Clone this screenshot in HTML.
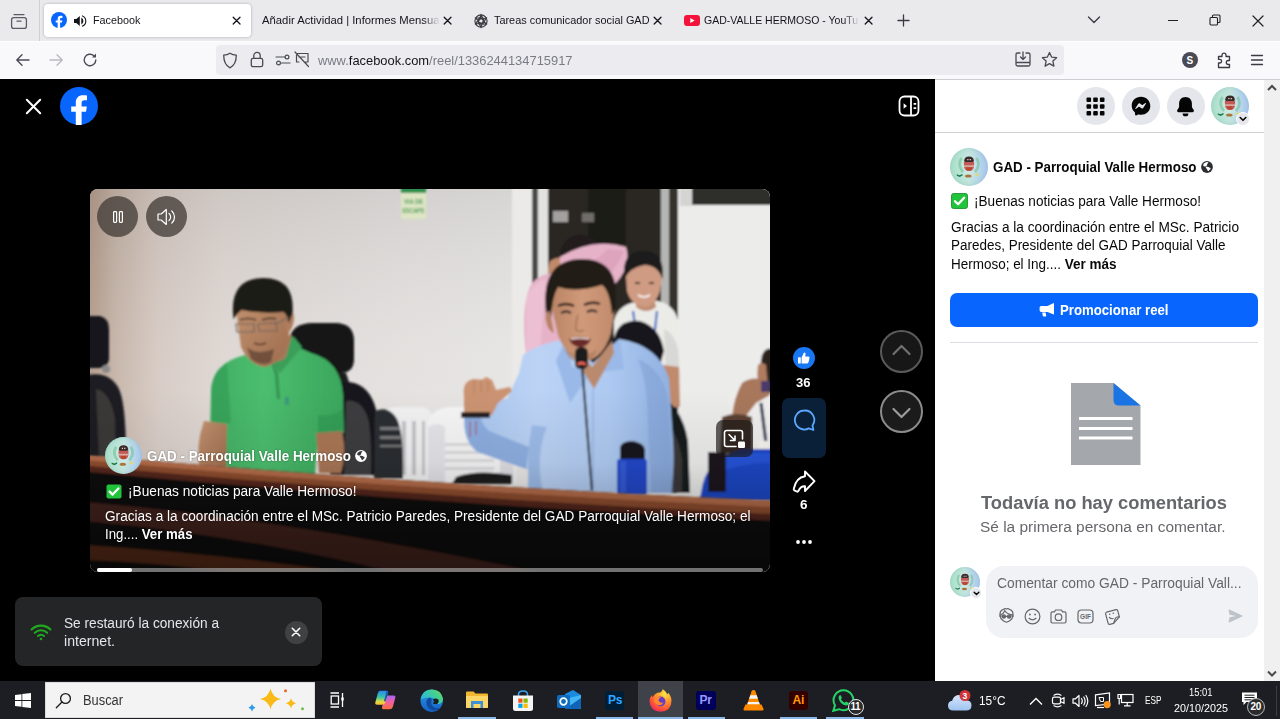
<!DOCTYPE html>
<html lang="es">
<head>
<meta charset="utf-8">
<title>Facebook</title>
<style>
*{box-sizing:border-box;margin:0;padding:0}
html,body{width:1280px;height:719px;overflow:hidden;background:#000;font-family:"Liberation Sans","DejaVu Sans",sans-serif;}
#root{position:relative;width:1280px;height:719px;overflow:hidden;background:#000}
.abs{position:absolute}
.t{position:absolute;white-space:nowrap;line-height:1;transform-origin:0 50%}
/* browser chrome */
#tabbar{left:0;top:0;width:1280px;height:41px;background:#eaeaed}
#navbar{left:0;top:41px;width:1280px;height:39px;background:#f9f9fb;border-bottom:1.500px solid #cdcdd2}
#acttab{left:44px;top:4px;width:207px;height:33px;background:#fff;border-radius:4px;box-shadow:0 0 3px rgba(0,0,0,.28)}
#urlbar{left:216px;top:45px;width:848px;height:30px;background:#ececf0;border-radius:4px}
.tabt{font-size:11.500px;color:#15141a;top:15.300px}
/* content */
#left{left:0;top:79px;width:935px;height:603px;background:#000}
#right{left:935px;top:80px;width:329px;height:602px;background:#fff}
#sbar{left:1264px;top:80px;width:16px;height:602px;background:#f0f0f0}
#taskbar{left:0;top:681px;width:1280px;height:38px;background:#1c1e23}
</style>
<style id="fit">
#tb1{transform:scaleX(0.9403)}
#tb2{transform:scaleX(0.9824)}
#tb3{transform:scaleX(0.9466)}
#tb4{transform:scaleX(0.9136)}
#url{transform:scaleX(0.9551)}
#cap1{transform:scaleX(0.9570)}
#cap2{transform:scaleX(0.9766)}
#cap3{transform:scaleX(0.9729)}
#cap4{transform:scaleX(0.9445)}
#n36{transform:scaleX(1.0022)}
#n6{transform:scaleX(1.0367)}
#to1{transform:scaleX(0.9763)}
#to2{transform:scaleX(1.0080)}
#rp1{transform:scaleX(0.9546)}
#rp2{transform:scaleX(0.9702)}
#rp3{transform:scaleX(0.9765)}
#rp4{transform:scaleX(0.9620)}
#rp5{transform:scaleX(0.9622)}
#rp6{transform:scaleX(0.9422)}
#rp7{transform:scaleX(1.0467)}
#rp8{transform:scaleX(0.9963)}
#rp9{transform:scaleX(0.9861)}
#tk1{transform:scaleX(0.9179)}
#tk2{transform:scaleX(0.9123)}
#tk3{transform:scaleX(0.7851)}
#tk4{transform:scaleX(0.8942)}
#tk5{transform:scaleX(1.0273)}
</style>
</head>
<body>
<div id="root">
<svg width="0" height="0" style="position:absolute"><defs>
<linearGradient id="avg" x1="0" x2="1" y1="0" y2="0"><stop offset="0" stop-color="#a6dfc6"/><stop offset=".5" stop-color="#bfe3dc"/><stop offset="1" stop-color="#a6c4f0"/></linearGradient>
<filter id="avb" x="-10%" y="-10%" width="120%" height="120%"><feGaussianBlur stdDeviation=".45"/></filter>
<radialGradient id="avh" cx=".5" cy=".5" r=".5"><stop offset="0" stop-color="#fff" stop-opacity=".35"/><stop offset=".7" stop-color="#fff" stop-opacity=".05"/><stop offset="1" stop-color="#6aa" stop-opacity=".18"/></radialGradient>

</defs></svg>
<!--CHROME-->
<div id="tabbar" class="abs"></div>
<div id="navbar" class="abs"></div>
<div id="navhl" class="abs" style="left:0;top:41px;width:1280px;height:1px;background:#fdfdfe"></div>
<div id="acttab" class="abs"></div>
<div id="urlbar" class="abs"></div>
<!--CHROME-ITEMS-->
<!-- tab manager icon -->
<svg class="abs" style="left:9px;top:11px" width="20" height="20" viewBox="0 0 20 20" fill="none" stroke="#5b5b66" stroke-width="1.3" stroke-linecap="round"><rect x="2.6" y="6.6" width="14.8" height="10.8" rx="2.2"/><path d="M5 3.6h10M8 10.2h4"/></svg>
<div class="abs" style="left:39px;top:0;width:1px;height:41px;background:#cfcfd6"></div>
<!-- fb favicon -->
<svg class="abs" style="left:51px;top:12px" width="16" height="16" viewBox="0 0 16 16"><circle cx="8" cy="8" r="8" fill="#0866ff"/><path d="M9.1 16v-5.4h1.9l.35-2.2H9.1V7.1c0-.75.3-1.2 1.25-1.200h1.1V3.900c-.5-.08-1.100-.15-1.700-.15-1.900 0-3.100 1.100-3.100 3.100v1.550H4.700v2.200h1.950V16z" fill="#fff"/></svg>
<!-- sound icon -->
<svg class="abs" style="left:73px;top:14px" width="14" height="14" viewBox="0 0 14 14"><path d="M1 5h2.300L6.800 2v10L3.300 9H1z" fill="#15141a"/><path d="M8.300 3.600a3.800 3.800 0 0 1 0 6.800z" fill="#15141a"/><path d="M9 1.700a5.600 5.600 0 0 1 0 10.600" fill="none" stroke="#15141a" stroke-width="1.100"/></svg>
<span id="tb1" class="t tabt" style="left:93px">Facebook</span>
<svg class="abs" style="left:231px;top:15px" width="11" height="11" viewBox="0 0 11 11" stroke="#15141a" stroke-width="1.300" stroke-linecap="round"><path d="M2.200 2.200l6.800 6.800M9 2.200l-6.800 6.800"/></svg>
<span id="tb2" class="t tabt" style="left:262px">Añadir Actividad | Informes Mensua</span>
<div class="abs" style="left:424px;top:8px;width:16px;height:26px;background:linear-gradient(90deg,rgba(234,234,237,0),#eaeaed)"></div>
<svg class="abs" style="left:442px;top:15px" width="11" height="11" viewBox="0 0 11 11" stroke="#15141a" stroke-width="1.300" stroke-linecap="round"><path d="M2.200 2.200l6.800 6.800M9 2.200l-6.800 6.800"/></svg>
<!-- chatgpt icon -->
<svg class="abs" style="left:472.500px;top:12.500px" width="16" height="16" viewBox="0 0 15 15" fill="none" stroke="#3a3a42" stroke-width="1.100"><circle cx="7.500" cy="7.500" r="5.700"/><path d="M7.500 1.800L10 6.200 7.500 13.200 5 8.800zM2.600 4.700l5-.1 4.800 5.700-5 .1zM2.600 10.300l2.500-4.300 7.300-1.300-2.500 4.300z"/></svg>
<span id="tb3" class="t tabt" style="left:494px">Tareas comunicador social GAD</span>
<svg class="abs" style="left:652px;top:15px" width="11" height="11" viewBox="0 0 11 11" stroke="#15141a" stroke-width="1.300" stroke-linecap="round"><path d="M2.200 2.200l6.800 6.800M9 2.200l-6.800 6.800"/></svg>
<!-- youtube -->
<svg class="abs" style="left:684px;top:15px" width="16" height="11" viewBox="0 0 16 11"><rect width="16" height="11" rx="3" fill="#f4133a"/><path d="M6.300 3l4.300 2.500L6.300 8z" fill="#fff"/></svg>
<span id="tb4" class="t tabt" style="left:704px">GAD-VALLE HERMOSO - YouTul</span>
<div class="abs" style="left:844px;top:8px;width:18px;height:26px;background:linear-gradient(90deg,rgba(234,234,237,0),#eaeaed 85%)"></div>
<svg class="abs" style="left:863px;top:15px" width="11" height="11" viewBox="0 0 11 11" stroke="#15141a" stroke-width="1.300" stroke-linecap="round"><path d="M2.200 2.200l6.800 6.800M9 2.200l-6.800 6.800"/></svg>
<!-- plus -->
<svg class="abs" style="left:897px;top:14px" width="13" height="13" viewBox="0 0 13 13" stroke="#3a3a42" stroke-width="1.300" stroke-linecap="round"><path d="M6.500 1v11M1 6.500h11"/></svg>
<!-- chevron -->
<svg class="abs" style="left:1087px;top:15px" width="14" height="10" viewBox="0 0 14 10" fill="none" stroke="#3a3a42" stroke-width="1.300" stroke-linecap="round" stroke-linejoin="round"><path d="M1.500 2l5.500 5.500L12.500 2"/></svg>
<!-- window controls -->
<div class="abs" style="left:1168px;top:19.500px;width:10px;height:1.200px;background:#222"></div>
<svg class="abs" style="left:1209px;top:14px" width="12" height="12" viewBox="0 0 12 12" fill="none" stroke="#222" stroke-width="1.100"><rect x="1" y="3.500" width="7.500" height="7.500" rx="1"/><path d="M3.500 3.500V2a1 1 0 0 1 1-1H10a1 1 0 0 1 1 1v5.500a1 1 0 0 1-1 1H8.500"/></svg>
<svg class="abs" style="left:1252px;top:15px" width="12" height="12" viewBox="0 0 12 12" stroke="#222" stroke-width="1.200" stroke-linecap="round"><path d="M1 1l10 10M11 1L1 11"/></svg>
<!-- nav icons -->
<svg class="abs" style="left:15px;top:53px" width="16" height="14" viewBox="0 0 16 14" fill="none" stroke="#4a4a55" stroke-width="1.400" stroke-linecap="round" stroke-linejoin="round"><path d="M14 7H2M7 1.800L1.800 7 7 12.200"/></svg>
<svg class="abs" style="left:48px;top:53px" width="16" height="14" viewBox="0 0 16 14" fill="none" stroke="#b9b9c0" stroke-width="1.400" stroke-linecap="round" stroke-linejoin="round"><path d="M2 7h12M9 1.800L14.200 7 9 12.200"/></svg>
<svg class="abs" style="left:82px;top:52px" width="16" height="16" viewBox="0 0 16 16" fill="none" stroke="#4a4a55" stroke-width="1.400" stroke-linecap="round"><path d="M13.800 8a5.800 5.800 0 1 1-1.900-4.300"/><path d="M14 1.600v4h-4z" fill="#4a4a55" stroke="none"/></svg>
<!-- url bar icons -->
<svg class="abs" style="left:222px;top:52px" width="16" height="17" viewBox="0 0 16 17" fill="none" stroke="#4a4a55" stroke-width="1.300" stroke-linejoin="round"><path d="M8 1.200c2 1.300 4 1.800 6.300 1.900 0 6-1.600 10.500-6.300 12.700C3.300 13.600 1.700 9.100 1.700 3.100 4 3 6 2.500 8 1.200z"/></svg>
<svg class="abs" style="left:250px;top:51px" width="14" height="17" viewBox="0 0 14 17" fill="none" stroke="#4a4a55" stroke-width="1.300"><rect x="1.300" y="7.300" width="11.400" height="8.400" rx="1.800"/><path d="M3.800 7.300V4.600a3.200 3.200 0 0 1 6.400 0v2.700"/></svg>
<svg class="abs" style="left:275px;top:53px" width="16" height="14" viewBox="0 0 16 14" fill="none" stroke="#4a4a55" stroke-width="1.200" stroke-linecap="round"><path d="M1 4h8.500M6.500 10H15"/><circle cx="12" cy="4" r="1.900"/><circle cx="3.500" cy="10" r="1.900"/></svg>
<svg class="abs" style="left:294px;top:51px" width="16" height="17" viewBox="0 0 16 17" fill="none" stroke="#4a4a55" stroke-width="1.200" stroke-linecap="round" stroke-linejoin="round"><path d="M2.500 2.500h11.500v8.500H11l2.500 3.500M5 11H2.500V4M5 6h6M1 1l13.500 14.500"/></svg>
<span id="url" class="t" style="left:318px;top:54.300px;font-size:13.500px;color:#7a7a85">www.<span style="color:#15141a">facebook.com</span>/reel/1336244134715917</span>
<svg class="abs" style="left:1014px;top:51px" width="18" height="17" viewBox="0 0 18 17" fill="none" stroke="#4a4a55" stroke-width="1.300" stroke-linecap="round" stroke-linejoin="round"><path d="M6 2H3.500a1.500 1.500 0 0 0-1.500 1.500v10A1.500 1.500 0 0 0 3.500 15h11a1.500 1.500 0 0 0 1.500-1.500v-10A1.500 1.500 0 0 0 14.500 2H12M2 11.500h14M9 1v7.500M6.500 6L9 8.500 11.500 6"/></svg>
<svg class="abs" style="left:1041px;top:51px" width="17" height="17" viewBox="0 0 17 17" fill="none" stroke="#4a4a55" stroke-width="1.300" stroke-linejoin="round"><path d="M8.500 1.500l2.100 4.600 5 .6-3.700 3.400 1 5-4.400-2.500-4.400 2.500 1-5L1.400 6.700l5-.6z"/></svg>
<div class="abs" style="left:1182px;top:52px;width:16px;height:16px;border-radius:50%;background:#4a4a55"></div>
<span class="t" style="left:1186.500px;top:55.500px;font-size:10px;font-weight:bold;color:#fff">S</span>
<svg class="abs" style="left:1216px;top:51px" width="16" height="18" viewBox="0 0 16 18" fill="none" stroke="#3a3a42" stroke-width="1.300" stroke-linejoin="round"><path d="M6 4.200a2 2 0 1 1 4 0V5.500h3.500v4h-1.200a2 2 0 1 0 0 4h1.200V16.500H2.500V12h1.300a1.800 1.800 0 1 0 0-3.600H2.500V5.500H6z"/></svg>
<svg class="abs" style="left:1250px;top:54px" width="14" height="12" viewBox="0 0 14 12" stroke="#3a3a42" stroke-width="1.300" stroke-linecap="round"><path d="M1.500 1.500h11M1.500 6h11M1.500 10.500h11"/></svg>
<!--/CHROME-ITEMS-->
<!--CONTENT-->
<div id="left" class="abs"></div>
<div id="right" class="abs"></div>
<div id="sbar" class="abs"></div>
<!--VIDEO-->
<div id="video" class="abs" style="left:90px;top:189px;width:680px;height:383px;border-radius:8px;overflow:hidden;background:#d9d2cf">
<svg width="680" height="383" viewBox="0 0 680 383" style="position:absolute;left:0;top:0">
<defs>
<linearGradient id="wall" x1="0" x2="1" y1="0" y2="0"><stop offset="0" stop-color="#b39c8c"/><stop offset=".04" stop-color="#c6b5a9"/><stop offset=".1" stop-color="#d6cac3"/><stop offset=".2" stop-color="#ded7d3"/><stop offset=".4" stop-color="#e2dedc"/><stop offset=".62" stop-color="#e6e5e3"/><stop offset="1" stop-color="#ebebea"/></linearGradient>
<linearGradient id="wallv" x1="0" x2="0" y1="0" y2="1"><stop offset="0" stop-color="#000" stop-opacity=".07"/><stop offset=".45" stop-color="#fff" stop-opacity=".04"/><stop offset="1" stop-color="#fff" stop-opacity=".16"/></linearGradient>
<linearGradient id="shade" x1="0" x2="0" y1="0" y2="1"><stop offset="0" stop-color="#000" stop-opacity="0"/><stop offset=".4" stop-color="#000" stop-opacity=".06"/><stop offset=".7" stop-color="#000" stop-opacity=".22"/><stop offset="1" stop-color="#000" stop-opacity=".4"/></linearGradient>
<linearGradient id="rim" x1="0" x2="0" y1="0" y2="1"><stop offset="0" stop-color="#bb7250"/><stop offset=".35" stop-color="#96502f"/><stop offset="1" stop-color="#4a2416"/></linearGradient>
<linearGradient id="blue" x1="0" x2="1" y1="0" y2="0"><stop offset="0" stop-color="#a6c4ee"/><stop offset=".35" stop-color="#bcd3f5"/><stop offset=".7" stop-color="#adc9f1"/><stop offset="1" stop-color="#8fafe0"/></linearGradient>
<linearGradient id="green" x1="0" x2="1" y1="0" y2="0"><stop offset="0" stop-color="#3fae62"/><stop offset=".4" stop-color="#4cbd6e"/><stop offset="1" stop-color="#3aa65c"/></linearGradient>
<linearGradient id="skin1" x1="0" x2="1" y1="0" y2="1"><stop offset="0" stop-color="#c39270"/><stop offset="1" stop-color="#9c6b4c"/></linearGradient>
<linearGradient id="skin2" x1="0" x2="1" y1="0" y2="0"><stop offset="0" stop-color="#b98464"/><stop offset=".5" stop-color="#d09a7a"/><stop offset="1" stop-color="#c08a6c"/></linearGradient>
<filter id="b1" x="-5%" y="-5%" width="110%" height="110%"><feGaussianBlur stdDeviation="0.9"/></filter>
<filter id="b2" x="-10%" y="-10%" width="120%" height="120%"><feGaussianBlur stdDeviation="2.500"/></filter>
</defs>
<rect width="680" height="383" fill="url(#wall)"/>
<rect width="680" height="383" fill="url(#wallv)"/>
<g filter="url(#b1)">
<!-- door area -->
<rect x="422" y="-5" width="20" height="300" fill="#ebeae8"/>
<rect x="442" y="-5" width="6" height="300" fill="#4a4845"/>
<rect x="448" y="-5" width="10" height="300" fill="#e2e2e0"/>
<rect x="458" y="-5" width="113" height="300" fill="#2a2623"/>
<rect x="498" y="-5" width="38" height="60" fill="#1c1a19"/>
<rect x="463" y="22" width="15" height="11" fill="#a3a19f"/>
<rect x="492" y="24" width="12" height="9" fill="#6f6c69"/>
<rect x="571" y="-5" width="8" height="300" fill="#b5b5b3"/>
<rect x="579" y="-5" width="9" height="300" fill="#35322f"/>
<rect x="588" y="-5" width="100" height="320" fill="#ececeb"/>
<rect x="590" y="-5" width="12" height="22" fill="#d4d4d2"/>
<rect x="602" y="-5" width="90" height="21" fill="#2f2e2b"/>
<!-- sign -->
<rect x="311" y="-2" width="25" height="32" fill="#dde6c4"/>
<rect x="311" y="-2" width="25" height="6" fill="#2f8f4f"/>
<text x="323.500" y="14.500" font-family="Liberation Sans, sans-serif" font-size="6.500" font-weight="bold" text-anchor="middle" fill="#4f9c58" textLength="19" lengthAdjust="spacingAndGlyphs">VIA DE</text>
<text x="323.500" y="24" font-family="Liberation Sans, sans-serif" font-size="6.500" font-weight="bold" text-anchor="middle" fill="#4f9c58" textLength="22" lengthAdjust="spacingAndGlyphs">ESCAPE</text>
<!-- white plastic chairs -->
<path d="M293 226q2-8 14-8h22q12 0 13 9l2 66h-52z" fill="#f1f1f2"/>
<path d="M302 232h4v54h-4zM312 232h4v54h-4zM322 232h4v54h-4zM332 232h3v54h-3z" fill="#c4c4c8"/>
<path d="M338 232q6-14 24-14h40q20 0 22 14l2 62h-90z" fill="#f5f5f6"/>
<path d="M352 254h52v3h-52zM352 262h52v3h-52zM352 270h52v3h-52zM352 278h52v3h-52z" fill="#dadade"/>
<path d="M338 238q10-6 17 0v56h-17z" fill="#e4e4e8"/>
<path d="M410 232q8-2 12 6l2 56h-14z" fill="#dfdfe3"/>
<!-- left chair -->
<path d="M-2 127h12q9 2 9 14v30q-2 8-10 8h-11z" fill="#15161a"/>
<path d="M-2 186q20-4 30 12q8 14 8 70h-38z" fill="#1b1c20"/>
<path d="M6 200q14 2 19 30v38h-16z" fill="#55514e" opacity=".55"/>
<circle cx="16" cy="180" r="4" fill="#8a8a8c"/>
<!-- chair behind green man -->
<path d="M199 152q2-18 24-18h22q19 0 19 18v18q0 14-14 14h-38q-13 0-13-14z" fill="#121316"/>
<path d="M236 184h20l4 12h-24z" fill="#1a1b1e"/>
<path d="M246 194q28-6 38 20q8 22 6 72h-50z" fill="#17181b"/>
<path d="M256 212q18-2 23 22q3 22 2 52h-27z" fill="#4a4a4c" opacity=".75"/>
<!-- backpack -->
<path d="M285 222q14-6 22 8q7 14 6 60h-29z" fill="#2c2d31"/>
<path d="M290 238h20v3h-20zM290 247h21v3h-21zM290 256h22v2h-22z" fill="#9a9a9c" opacity=".7"/>
<!-- green man -->
<path d="M121 204q0-30 34-38l22-10h26l18 8q30 8 32 42l1 38-26 2-3 40h-88l-4-42-13-2z" fill="url(#green)"/>
<path d="M121 204q0-20 16-30l4 60-19 2z" fill="#37a058" opacity=".8"/>
<path d="M228 246l26-2-1-24q-10 8-25 6z" fill="#2f9852" opacity=".7"/>
<path d="M168 160l10-12 26 0 8 10-22 26z" fill="#3a9f5a"/>
<path d="M180 170l8 14 2 26h-3l-2-24z" fill="#2e8a4c" opacity=".8"/>
<path d="M114 232l23 3-1 48h-26q-5-26 4-51z" fill="url(#skin1)"/>
<path d="M226 244l26-2q5 22-1 42h-22z" fill="#a87655"/>
<path d="M172 150l6 20q10 6 18-2l6-22z" fill="#a8775a"/>
<path d="M146 122q-1-6 2-10l48-2q7 10 4 28l-3 18q-6 18-22 22-16-2-24-20z" fill="url(#skin1)"/>
<path d="M196 124q8-4 8 6-1 12-8 14z" fill="#b07d5e"/>
<path d="M143.500 130q-5-41 30-41 32 0 29 36l-4 9q-1-8-5-11-22 2-42-2-4 3-8 9z" fill="#1c1a19"/>
<path d="M157 158q10 9 27 2l-3 13q-10 5-20-3z" fill="#5f4334" opacity=".75"/>
<path d="M150 131q8-3 16 0M172 131q8-3 14-1" stroke="#3a2a22" stroke-width="2" fill="none" opacity=".7"/>
<path d="M146 135h18v8h-17zM168 135l18-1 1 8h-18z" fill="none" stroke="#6f6661" stroke-width="1.200"/>
<path d="M186 135l13-7" stroke="#6f6661" stroke-width="1.200"/>
<path d="M164 154q6 3 12 0" stroke="#5a3a2c" stroke-width="1.500" fill="none"/>
<path d="M196 208v8M198 208v8" stroke="#2a5f9a" stroke-width="1" opacity=".7"/>
<!-- pink shirt man -->
<path d="M470 62q6-18 24-16 15 2 15 18l-4 14h-31z" fill="#221e1d"/>
<path d="M460 72q-6 14 6 22l12-4-2-20q-8-4-16 2z" fill="#c08a6a"/>
<path d="M470 68q32-20 66-10 6 20-12 38l-22 30-2 40h-64q-6-52 6-72 12-12 28-10z" fill="#e6b2c8"/>
<path d="M478 86q20-6 40-26l16 2q-10 24-34 40z" fill="#d99ab6" opacity=".6"/>
<path d="M436 110q6-16 20-20l-6 74h-14z" fill="#eec2d4" opacity=".8"/>
<!-- white shirt man -->
<path d="M524 132q4-18 28-20h16q20 4 22 30l2 75h-68z" fill="#ebebe8"/>
<path d="M574 140q10 4 14 20l2 30-14-4z" fill="#d8d8d6"/>
<path d="M546 108q8 10 18 0l2 10q-10 8-20 0z" fill="#c08d72"/>
<path d="M536 88q-2-18 17-20 19 0 19 20l-2 14q-5 16-16 16-13-2-17-16z" fill="#cf9b82"/>
<path d="M534.500 90q-4-28 19-28 22 0 19 28-5-14-18-14-14 2-20 14z" fill="#1f1c1b"/>
<path d="M545 94h5M559 94h5" stroke="#3a2620" stroke-width="1.800"/>
<path d="M548 106q6 4 12 0" stroke="#fff" stroke-width="1.600" fill="none"/>
<path d="M543 122l4 28M567 122l-3 28" stroke="#2a5fc0" stroke-width="2" fill="none"/>
<path d="M573 176l16 2 1 40h-13z" fill="#c08a6c"/>
<!-- chair behind blue man -->
<path d="M524 150q4-20 26-18 20 6 24 30l-4 14h-46z" fill="#14151a"/>
<path d="M566 204q26 12 32 48l2 52h-44z" fill="#191a1e"/>
<path d="M576 234q12 10 16 36v34h-16z" fill="#4a4643" opacity=".7"/>
<!-- blue shirt man -->
<path d="M433 166q16-12 44-16l26 24 26-24q40 6 50 40l4 60q2 30-2 54h-144L439 281 387 263Q371 250 375 222l6-16 36 4 12-26z" fill="url(#blue)"/>
<path d="M436 280l-48-17q-17-12-13-41l6-16 12 2q-8 22 6 34l40 16z" fill="#84a6dc" opacity=".8"/>
<path d="M442 236q-6 30-3 68h14q-8-38 4-66z" fill="#8eb0e2" opacity=".7"/>
<path d="M548 170q24 10 30 40l5 94h-22l-4-90q-2-28-9-44z" fill="#7f9fd4" opacity=".55"/>
<path d="M476 150l6 28 20 4-22 32-14-42zM530 150l4 30-30 4 14-24z" fill="#9ab9e8"/>
<path d="M484 152l18 26 20-26 2 12-20 36-22-36z" fill="#b98a6e"/>
<path d="M503 200v100" stroke="#8aaadc" stroke-width="1.500" opacity=".7"/>
<path d="M462 120q-4-16 1-26l56-2q8 12 5 34l-3 18q-8 26-26 28-18-2-27-26z" fill="url(#skin2)"/>
<path d="M456 124q-6-54 36-54 40 0 33 50l-3 6q-2-24-10-30-26 8-44 2-6 10-7 32z" fill="#221b18"/>
<path d="M460 122q-6 0-4 10 2 10 8 12z" fill="#b78363"/>
<path d="M468 117q8-4 16 0M494 116q8-4 16-1" stroke="#2a1c16" stroke-width="2.400" fill="none"/>
<path d="M471 124q5-3 10 0M497 123q5-3 10 0" stroke="#2f2a2a" stroke-width="2.400" fill="none"/>
<path d="M488 126q-3 10-2 15 4 3 8 0" stroke="#a87658" stroke-width="1.600" fill="none"/>
<path d="M479 150q11-5 22 0-3 8-11 8-8 0-11-8z" fill="#6a2a2a"/>
<path d="M481 150q9-2 18 0" stroke="#f0e6e0" stroke-width="1.600" fill="none"/>
<path d="M474 160q16 12 34 0l-6 10q-12 6-22 0z" fill="#a87658" opacity=".6"/>
<!-- hand -->
<path d="M374 206q-2-14 10-16l8 1 4-3 6 3 4 10 14-3 2 4-14 12-6 12h-28z" fill="#cb9372"/>
<path d="M384 192v12M391 190v13M398 192v11" stroke="#a87658" stroke-width="1" opacity=".7"/>
<path d="M371 223h29v6h-29z" fill="#2a2024"/>
<path d="M380 232v16M386 232v14" stroke="#b0405a" stroke-width="1.200" opacity=".8"/>
<!-- mic -->
<path d="M492 176L502 302" stroke="#20232a" stroke-width="2.200"/>
<rect x="485" y="158" width="13" height="22" rx="5.500" fill="#1a1a1d"/>
<path d="M487.500 175.500q4-3 8 0" stroke="#ff6a5a" stroke-width="2.200" fill="none"/>
<!-- woman right -->
<path d="M672 166q4-8 10-6v44h-6q-8-18-4-38z" fill="#2a201c"/>
<path d="M668 176q4-4 8 0l2 24-8 4q-4-14-2-28z" fill="#b07c60"/>
<path d="M641 204q8-8 18-4l10 10 13 4v56h-38q-6-36-3-66z" fill="#efeeec"/>
<path d="M652 194q8-6 18-4l10 2v14l-14 8-14 18q-8 2-10-4 2-20 10-34z" fill="#a8775c"/>
<path d="M671 192h9v11h-9z" fill="#4a3a6a"/>
<path d="M632 228q14-6 30 0v36h-32z" fill="#5a3f32"/>
<path d="M671 214l5 40" stroke="#1a2348" stroke-width="3"/>
<path d="M668 252h10v18h-10z" fill="#f4f3ee"/>
<path d="M611 304q4-36 42-44h30v52h-74z" fill="#1c46c4"/>
<path d="M630 270q20-8 50-6v10q-30 0-50 10z" fill="#2a58de" opacity=".7"/>
<path d="M618 263h18v40h-18z" fill="#1b191a"/>
<!-- bottle -->
<rect x="527" y="270" width="30" height="36" rx="3" fill="#2046c8"/>
<rect x="530" y="272" width="6" height="32" fill="#3a62d8" opacity=".7"/>
<path d="M530 258q2-6 12-6 13 2 13 10v8h-25z" fill="#17181c"/>
<!-- dark arm-rest -->
<path d="M366 288q20-8 56-2v9h-60z" fill="#1a1a1c"/>
</g>
<!-- table -->
<g filter="url(#b1)">
<path d="M-5 266Q340 297 690 312V390H-5z" fill="#0f0d0d"/>
<path d="M-5 266Q340 297 690 312V319Q340 303.500 -5 271.500z" fill="#b46c4a"/><path d="M-5 271Q340 303 690 318.500V326Q340 310 -5 277z" fill="#8e4d2e"/><path d="M-5 276.500Q340 309.500 690 325.500V332Q340 315.500 -5 282.500z" fill="#54281a"/>
<path d="M-5 313Q200 330 480 390H330Q170 348 -5 332z" fill="#43241a"/>
<path d="M-5 356Q150 366 300 390H180Q90 374 -5 371z" fill="#552a18"/>
</g>
<rect x="0" y="200" width="680" height="183" fill="url(#shade)"/>
</svg>
</div>
<!--/VIDEO-->
<!--LEFT-ITEMS-->
<!-- close X -->
<svg class="abs" style="left:25px;top:98px" width="17" height="17" viewBox="0 0 17 17" stroke="#fff" stroke-width="2" stroke-linecap="round"><path d="M1.800 1.800l13.400 13.400M15.200 1.800L1.800 15.200"/></svg>
<!-- fb logo -->
<svg class="abs" style="left:60px;top:87px" width="38" height="38" viewBox="0 0 38 38"><circle cx="19" cy="19" r="19" fill="#0866ff"/><path d="M21.600 38V24.800h4.400l.85-5.300H21.600v-3.400c0-1.700.75-2.900 3-2.900h2.400V8.600c-1.100-.2-2.700-.4-4-.4-4.400 0-7.200 2.600-7.200 7.300v4H11.200v5.300h4.600V38z" fill="#fff"/></svg>
<!-- panel toggle icon -->
<svg class="abs" style="left:898px;top:95px" width="22" height="22" viewBox="0 0 22 22" fill="none" stroke="#fff" stroke-width="1.800"><rect x="1.500" y="1.500" width="19" height="19" rx="5"/><path d="M13 1.500v19"/><path d="M5.600 8.200l3.400 2.800-3.400 2.800z" fill="#fff" stroke="none"/><path d="M15.600 8h2.600v1.800h-2.600zM15.600 12.200h2.600V14h-2.600z" fill="#fff" stroke="none"/></svg>
<!-- video controls -->
<div class="abs" style="left:97px;top:196px;width:41px;height:41px;border-radius:50%;background:rgba(68,61,56,.78)"></div>
<svg class="abs" style="left:111px;top:209px" width="14" height="16" viewBox="0 0 14 16" fill="none" stroke="#fff" stroke-width="1.200"><rect x="2.600" y="2.600" width="3" height="10.800" rx=".8"/><rect x="8.400" y="2.600" width="3" height="10.800" rx=".8"/></svg>
<div class="abs" style="left:146px;top:196px;width:41px;height:41px;border-radius:50%;background:rgba(68,61,56,.78)"></div>
<svg class="abs" style="left:156px;top:207px" width="22" height="20" viewBox="0 0 22 20" fill="none" stroke="#fff" stroke-width="1.200" stroke-linejoin="round" stroke-linecap="round"><path d="M2 7h3.200L10.300 2.500v15L5.200 13H2z"/><path d="M13 6.500a4.500 4.500 0 0 1 0 7M15.800 4a8 8 0 0 1 0 12"/></svg>
<!-- PiP button -->
<div class="abs" style="left:716px;top:420px;width:37px;height:37px;border-radius:7px;background:rgba(28,24,22,.68)"></div>
<svg class="abs" style="left:723px;top:428px" width="24" height="22" viewBox="0 0 24 22" fill="none" stroke="#fff" stroke-width="1.600" stroke-linecap="round" stroke-linejoin="round"><path d="M13 18.500H3.500a2 2 0 0 1-2-2v-12a2 2 0 0 1 2-2h14a2 2 0 0 1 2 2V11"/><path d="M6 6.500l6 6M12 8v4.500H7.500"/><rect x="15" y="13.500" width="7" height="6.500" rx="1.200" fill="#fff" stroke="none"/></svg>
<!-- caption -->
<svg class="abs" style="left:105px;top:437px" width="37" height="37" viewBox="0 0 38 38"><circle cx="19" cy="19" r="19" fill="url(#avg)"/><circle cx="19" cy="19" r="19" fill="url(#avh)"/><g filter="url(#avb)"><path d="M11.500 10q-4.500 7 1.500 14M26.500 10q4.500 7-1.500 14" fill="none" stroke="#6fbf9a" stroke-width="2.800" opacity=".6"/><path d="M14.200 12.500q.3-4 4.800-4t4.800 4l-.6 2h-8.400z" fill="#3b2a2b"/><path d="M17.300 11h1.200v1.200h-1.200zM19.700 11h1.200v1.200h-1.200z" fill="#e8d8d0"/><path d="M13.800 14h10.400l-.4 5.500q-.8 3.200-4.800 3.500-4-.3-4.800-3.500z" fill="#c25a56"/><path d="M14 17.300h10v1.600H14z" fill="#dcaea4"/><path d="M16.500 19.500h5v3h-5z" fill="#b8452f"/><path d="M6.800 26.200l2.600 1 3-1.200.2 1.600-3 1.300-2.800-1.200z" fill="#1f7a48"/><ellipse cx="18.300" cy="28" rx="3.300" ry="1.600" fill="#a8763a"/><path d="M24 26.500l3-1 2.800 1-2.600 1.600z" fill="#e3d86a"/></g></svg>
<span id="cap1" class="t" style="left:146.500px;top:449.35px;font-size:14px;font-weight:bold;color:#fff;text-shadow:0 0 2px rgba(0,0,0,.45)">GAD - Parroquial Valle Hermoso</span>
<svg class="abs" style="left:355px;top:450px" width="12" height="12" viewBox="0 0 12 12"><path fill-rule="evenodd" d="M6 .1a5.900 5.900 0 1 0 0 11.800A5.900 5.900 0 0 0 6 .1zM2 4.600Q2.100 2 5 1.200L7.400 1.100Q6.900 2.500 6.200 3.200L5.600 5Q4.600 5.900 3.800 5.200 3 5.800 2 4.600zM4.600 6.100Q6 5.600 7.500 6L9.700 7.200Q9.500 8.500 8.500 9L7.300 10.300Q6.400 9.600 6.200 8.400 5 7.400 4.600 6.100z" fill="#fff"/></svg>
<svg class="abs" style="left:106px;top:484px" width="16" height="15" viewBox="0 0 16 15"><rect x=".5" y=".5" width="15" height="14" rx="2" fill="#22c33c"/><path d="M3.600 7.600l3 3 5.800-6.200" fill="none" stroke="#fff" stroke-width="2.200" stroke-linecap="round" stroke-linejoin="round"/></svg>
<span id="cap2" class="t" style="left:127.500px;top:484.45px;font-size:14px;color:#fff;text-shadow:0 0 2px rgba(0,0,0,.45)">¡Buenas noticias para Valle Hermoso!</span>
<span id="cap3" class="t" style="left:104.500px;top:509.35px;font-size:14px;color:#fff;text-shadow:0 0 2px rgba(0,0,0,.45)">Gracias a la coordinación entre el MSc. Patricio Paredes, Presidente del GAD Parroquial Valle Hermoso; el</span>
<span id="cap4" class="t" style="left:104.500px;top:526.95px;font-size:14px;color:#fff;text-shadow:0 0 2px rgba(0,0,0,.45)">Ing.... <b>Ver más</b></span>
<!-- progress -->
<div class="abs" style="left:97px;top:568px;width:666px;height:4px;border-radius:2px;background:rgba(150,150,150,.75)"></div>
<div class="abs" style="left:97px;top:568px;width:35px;height:4px;border-radius:2px;background:#fff"></div>
<!-- action column -->
<div class="abs" style="left:793px;top:347px;width:22px;height:22px;border-radius:50%;background:#1877f2"></div>
<svg class="abs" style="left:797px;top:351px" width="14" height="14" viewBox="0 0 14 14" fill="#fff"><rect x="1" y="6.200" width="2.800" height="6.300" rx=".6"/><path d="M4.600 6.400l2.400-4.800q1.600-.2 1.600 1.500l-.4 2.300h3.200q1.400.2 1.100 1.500l-1 4.400q-.4 1.200-1.500 1.200H4.600z"/></svg>
<span id="n36" class="t" style="left:796px;top:376px;font-size:13px;font-weight:bold;color:#fff">36</span>
<div class="abs" style="left:782px;top:398px;width:44px;height:60px;border-radius:7px;background:#0a2039"></div>
<svg class="abs" style="left:792px;top:408px" width="25" height="25" viewBox="0 0 25 25" fill="none" stroke="#5aa7ff" stroke-width="1.800" stroke-linejoin="round"><path d="M12.300 2.500a9.500 9.500 0 1 0 4.500 17.900l4.600 1.600-.9-4.500A9.500 9.500 0 0 0 12.300 2.500z"/></svg>
<svg class="abs" style="left:792px;top:470px" width="24" height="23" viewBox="0 0 24 23" fill="none" stroke="#fff" stroke-width="1.900" stroke-linejoin="round"><path d="M13 1.500L22.500 11.200 13 21V16.200Q8.500 16 6.500 20.800 5.800 22 4.800 21.500L2.300 20.300Q1.500 19.800 1.800 18.800 4 7.500 13 6.200z"/></svg>
<span id="n6" class="t" style="left:799.500px;top:498px;font-size:13px;font-weight:bold;color:#fff">6</span>
<svg class="abs" style="left:795px;top:539px" width="18" height="6" viewBox="0 0 18 6" fill="#fff"><circle cx="3" cy="3" r="1.900"/><circle cx="9" cy="3" r="1.900"/><circle cx="15" cy="3" r="1.900"/></svg>
<!-- up / down -->
<div class="abs" style="left:880px;top:330px;width:43px;height:43px;border-radius:50%;background:#171717;border:2.500px solid #5a5a5a"></div>
<svg class="abs" style="left:891px;top:343px" width="21" height="14" viewBox="0 0 21 14" fill="none" stroke="#707070" stroke-width="2.200" stroke-linecap="round" stroke-linejoin="round"><path d="M2.500 11l8-8 8 8"/></svg>
<div class="abs" style="left:880px;top:390px;width:43px;height:43px;border-radius:50%;background:#1b1b1b;border:2.500px solid #8c8c8c"></div>
<svg class="abs" style="left:891px;top:406px" width="21" height="14" viewBox="0 0 21 14" fill="none" stroke="#9c9c9c" stroke-width="2.200" stroke-linecap="round" stroke-linejoin="round"><path d="M2.500 3l8 8 8-8"/></svg>
<!-- toast -->
<div class="abs" style="left:15px;top:597px;width:307px;height:69px;border-radius:8px;background:#242526"></div>
<svg class="abs" style="left:30px;top:623px" width="22" height="18" viewBox="0 0 22 18" fill="none" stroke="#1fa91f" stroke-width="2.100" stroke-linecap="round"><path d="M1.600 6.500a13.300 13.300 0 0 1 18.800 0M4.800 9.800a8.800 8.800 0 0 1 12.400 0M8 13a4.300 4.300 0 0 1 6 0"/><circle cx="11" cy="16" r="1.300" fill="#1fa91f" stroke="none"/></svg>
<span id="to1" class="t" style="left:63.500px;top:615.85px;font-size:14px;color:#e4e6eb">Se restauró la conexión a</span>
<span id="to2" class="t" style="left:63.500px;top:634.35px;font-size:14px;color:#e4e6eb">internet.</span>
<div class="abs" style="left:284.500px;top:620.500px;width:23px;height:23px;border-radius:50%;background:#3f4143"></div>
<svg class="abs" style="left:291px;top:627px" width="10" height="10" viewBox="0 0 10 10" stroke="#fff" stroke-width="1.600" stroke-linecap="round"><path d="M1.300 1.300l7.400 7.400M8.700 1.300L1.300 8.700"/></svg>
<!--/LEFT-ITEMS-->
<!--RIGHT-ITEMS-->
<!-- header buttons -->
<div class="abs" style="left:1076.500px;top:87px;width:38px;height:38px;border-radius:50%;background:#e4e6eb"></div>
<svg class="abs" style="left:1086px;top:96.500px" width="19" height="19" viewBox="0 0 19 19" fill="#050505"><rect x=".5" y=".5" width="4.600" height="4.600" rx="1"/><rect x="7.200" y=".5" width="4.600" height="4.600" rx="1"/><rect x="13.900" y=".5" width="4.600" height="4.600" rx="1"/><rect x=".5" y="7.200" width="4.600" height="4.600" rx="1"/><rect x="7.200" y="7.200" width="4.600" height="4.600" rx="1"/><rect x="13.900" y="7.200" width="4.600" height="4.600" rx="1"/><rect x=".5" y="13.900" width="4.600" height="4.600" rx="1"/><rect x="7.200" y="13.900" width="4.600" height="4.600" rx="1"/><rect x="13.900" y="13.900" width="4.600" height="4.600" rx="1"/></svg>
<div class="abs" style="left:1121.500px;top:87px;width:38px;height:38px;border-radius:50%;background:#e4e6eb"></div>
<svg class="abs" style="left:1130.500px;top:96px" width="20" height="20" viewBox="0 0 20 20"><path d="M10 .8C4.700.8.700 4.600.700 9.600c0 2.600 1.100 4.900 2.900 6.500.3.300.4.500.4.900l.1 1.700c0 .6.600.9 1.100.7l1.900-.8c.3-.1.500-.2.900-.1.700.200 1.300.300 2 .300 5.300 0 9.300-3.800 9.300-8.800S15.300.800 10 .800z" fill="#050505"/><path d="M4.400 12.200l2.900-4.400c.4-.6 1.100-.7 1.700-.3l2 1.500c.2.100.4.100.6 0l2.800-2c.4-.3.900.2.600.6l-2.800 4.400c-.4.600-1.200.7-1.700.3l-2.100-1.500c-.2-.1-.4-.1-.6 0l-2.800 2c-.4.300-.9-.2-.6-.6z" fill="#e4e6eb"/></svg>
<div class="abs" style="left:1166.500px;top:87px;width:38px;height:38px;border-radius:50%;background:#e4e6eb"></div>
<svg class="abs" style="left:1176px;top:95.500px" width="19" height="21" viewBox="0 0 19 21" fill="#050505"><path d="M9.500 1C5.800 1 3.100 3.800 3.100 7.400v3.200c0 .5-.2 1.100-.5 1.500L1.300 14c-.6 1 .1 2.200 1.200 2.200h14c1.100 0 1.800-1.200 1.200-2.200l-1.300-1.900c-.3-.4-.5-1-.5-1.500V7.400C15.900 3.800 13.200 1 9.500 1z"/><path d="M6.600 17.400h5.800a2.900 2.900 0 0 1-5.800 0z"/></svg>
<svg class="abs" style="left:1211px;top:87px" width="38" height="38" viewBox="0 0 38 38"><circle cx="19" cy="19" r="19" fill="url(#avg)"/><circle cx="19" cy="19" r="19" fill="url(#avh)"/><g filter="url(#avb)"><path d="M11.500 10q-4.500 7 1.500 14M26.500 10q4.500 7-1.500 14" fill="none" stroke="#6fbf9a" stroke-width="2.800" opacity=".6"/><path d="M14.200 12.500q.3-4 4.800-4t4.800 4l-.6 2h-8.400z" fill="#3b2a2b"/><path d="M17.300 11h1.200v1.200h-1.200zM19.700 11h1.200v1.200h-1.200z" fill="#e8d8d0"/><path d="M13.800 14h10.400l-.4 5.500q-.8 3.200-4.800 3.500-4-.3-4.800-3.500z" fill="#c25a56"/><path d="M14 17.300h10v1.600H14z" fill="#dcaea4"/><path d="M16.500 19.500h5v3h-5z" fill="#b8452f"/><path d="M6.800 26.200l2.600 1 3-1.200.2 1.600-3 1.300-2.800-1.200z" fill="#1f7a48"/><ellipse cx="18.300" cy="28" rx="3.300" ry="1.600" fill="#a8763a"/><path d="M24 26.500l3-1 2.800 1-2.600 1.600z" fill="#e3d86a"/></g></svg>
<div class="abs" style="left:1236px;top:112px;width:14px;height:14px;border-radius:50%;background:#e4e6eb;border:1px solid #fff"></div>
<svg class="abs" style="left:1239px;top:116px" width="8" height="6" viewBox="0 0 8 6" fill="none" stroke="#050505" stroke-width="1.600" stroke-linecap="round" stroke-linejoin="round"><path d="M1.200 1.500L4 4.300 6.800 1.500"/></svg>
<div class="abs" style="left:935px;top:132px;width:329px;height:1px;background:#ced0d4"></div>
<!-- post header -->
<svg class="abs" style="left:950px;top:148px" width="38" height="38" viewBox="0 0 38 38"><circle cx="19" cy="19" r="19" fill="url(#avg)"/><circle cx="19" cy="19" r="19" fill="url(#avh)"/><g filter="url(#avb)"><path d="M11.500 10q-4.500 7 1.500 14M26.500 10q4.500 7-1.500 14" fill="none" stroke="#6fbf9a" stroke-width="2.800" opacity=".6"/><path d="M14.200 12.500q.3-4 4.800-4t4.800 4l-.6 2h-8.400z" fill="#3b2a2b"/><path d="M17.300 11h1.200v1.200h-1.200zM19.700 11h1.200v1.200h-1.200z" fill="#e8d8d0"/><path d="M13.800 14h10.400l-.4 5.500q-.8 3.200-4.800 3.500-4-.3-4.800-3.500z" fill="#c25a56"/><path d="M14 17.300h10v1.600H14z" fill="#dcaea4"/><path d="M16.500 19.500h5v3h-5z" fill="#b8452f"/><path d="M6.800 26.200l2.600 1 3-1.200.2 1.600-3 1.300-2.800-1.200z" fill="#1f7a48"/><ellipse cx="18.300" cy="28" rx="3.300" ry="1.600" fill="#a8763a"/><path d="M24 26.500l3-1 2.800 1-2.600 1.600z" fill="#e3d86a"/></g></svg>
<span id="rp1" class="t" style="left:992.500px;top:159.75px;font-size:14px;font-weight:bold;color:#080809">GAD - Parroquial Valle Hermoso</span>
<svg class="abs" style="left:1201px;top:160.500px" width="12" height="12" viewBox="0 0 12 12"><circle cx="6" cy="6" r="5.900" fill="#2b2d31"/><path d="M2 4.600Q2.100 2 5 1.200L7.400 1.100Q6.900 2.500 6.200 3.200L5.600 5Q4.600 5.900 3.800 5.200 3 5.800 2 4.600zM4.600 6.100Q6 5.600 7.500 6L9.700 7.200Q9.500 8.500 8.500 9L7.300 10.300Q6.400 9.600 6.200 8.400 5 7.400 4.600 6.100z" fill="#fff"/></svg>
<svg class="abs" style="left:951px;top:193px" width="17" height="16" viewBox="0 0 17 16"><rect x=".5" y=".5" width="16" height="15" rx="2" fill="#22c33c" stroke="#0e8a25" stroke-width=".8"/><path d="M4 8.200l3.100 3.100 6-6.600" fill="none" stroke="#fff" stroke-width="2.300" stroke-linecap="round" stroke-linejoin="round"/></svg>
<span id="rp2" class="t" style="left:974px;top:194.05px;font-size:14px;color:#080809">¡Buenas noticias para Valle Hermoso!</span>
<span id="rp3" class="t" style="left:950.500px;top:219.85px;font-size:14px;color:#080809">Gracias a la coordinación entre el MSc. Patricio</span>
<span id="rp4" class="t" style="left:950.500px;top:238.35px;font-size:14px;color:#080809">Paredes, Presidente del GAD Parroquial Valle</span>
<span id="rp5" class="t" style="left:950.500px;top:257.35px;font-size:14px;color:#080809">Hermoso; el Ing.... <b>Ver más</b></span>
<!-- promote button -->
<div class="abs" style="left:950px;top:293px;width:307.500px;height:34px;border-radius:7px;background:#0866ff"></div>
<svg class="abs" style="left:1039px;top:303px" width="16" height="14" viewBox="0 0 16 14" fill="#fff"><path d="M15 .6v10.200q0 .8-.8.500L8.500 8.900H2.200Q.6 8.900.6 7.300V4.600Q.6 3 2.200 3h6.300L14.200.2q.8-.3.800.4z"/><path d="M3.200 9.600h3.400l.6 3q.1.900-.7.900H4.600q-.7 0-.8-.7z"/></svg>
<span id="rp6" class="t" style="left:1060px;top:303.35px;font-size:14px;font-weight:bold;color:#fff">Promocionar reel</span>
<div class="abs" style="left:950px;top:341.500px;width:307.500px;height:1px;background:#dadde1"></div>
<!-- empty state doc -->
<svg class="abs" style="left:1071px;top:383px" width="70" height="82" viewBox="0 0 70 82"><path d="M0 0h42.500L69.500 22.500V82H0z" fill="#a4a7ab"/><path d="M42.500 0L69.500 22.500H48q-5.500 0-5.500-5.500z" fill="#1b74e4"/><path d="M8 34h53.500v3H8zM8 44h53.500v3H8zM8 53.500h53.500v3H8z" fill="#fff"/></svg>
<span id="rp7" class="t" style="left:981px;top:495.12px;font-size:17.5px;font-weight:bold;color:#65676b">Todavía no hay comentarios</span>
<span id="rp8" class="t" style="left:980px;top:518.92px;font-size:15.5px;color:#65676b">Sé la primera persona en comentar.</span>
<!-- comment composer -->
<svg class="abs" style="left:950px;top:567px" width="30" height="30" viewBox="0 0 38 38"><circle cx="19" cy="19" r="19" fill="url(#avg)"/><circle cx="19" cy="19" r="19" fill="url(#avh)"/><g filter="url(#avb)"><path d="M11.500 10q-4.500 7 1.500 14M26.500 10q4.500 7-1.500 14" fill="none" stroke="#6fbf9a" stroke-width="2.800" opacity=".6"/><path d="M14.200 12.500q.3-4 4.800-4t4.800 4l-.6 2h-8.400z" fill="#3b2a2b"/><path d="M17.300 11h1.200v1.200h-1.200zM19.700 11h1.200v1.200h-1.200z" fill="#e8d8d0"/><path d="M13.800 14h10.400l-.4 5.500q-.8 3.200-4.800 3.500-4-.3-4.800-3.500z" fill="#c25a56"/><path d="M14 17.300h10v1.600H14z" fill="#dcaea4"/><path d="M16.500 19.500h5v3h-5z" fill="#b8452f"/><path d="M6.800 26.200l2.600 1 3-1.200.2 1.600-3 1.300-2.800-1.200z" fill="#1f7a48"/><ellipse cx="18.300" cy="28" rx="3.300" ry="1.600" fill="#a8763a"/><path d="M24 26.500l3-1 2.800 1-2.600 1.600z" fill="#e3d86a"/></g></svg>
<div class="abs" style="left:970px;top:587px;width:12px;height:12px;border-radius:50%;background:#e4e6eb;border:1px solid #fff"></div>
<svg class="abs" style="left:972.500px;top:590.500px" width="7" height="5" viewBox="0 0 8 6" fill="none" stroke="#050505" stroke-width="1.700" stroke-linecap="round" stroke-linejoin="round"><path d="M1.200 1.500L4 4.300 6.800 1.500"/></svg>
<div class="abs" style="left:985.500px;top:565.500px;width:272px;height:72.500px;border-radius:18px;background:#f0f2f5"></div>
<span id="rp9" class="t" style="left:997px;top:576.15px;font-size:14px;color:#65676b">Comentar como GAD - Parroquial Vall...</span>

<svg class="abs" style="left:998px;top:607px" width="17" height="17" viewBox="0 0 17 17" fill="none" stroke="#65676b" stroke-width="1.200" stroke-linecap="round"><path d="M2.300 9.300Q1 3.300 5.600 2.300 7 .9 8.500 2q1.500-1.100 2.900.3 4.600 1 3.300 7-.7 4.200-6.200 5.900-5.500-1.700-6.200-5.900z"/><path d="M2.600 7.800q3-1 4.200-4 1.800 3.200 7.600 4"/><circle cx="5.900" cy="9.500" r="1.600" fill="#65676b"/><circle cx="11.100" cy="9.500" r="1.600" fill="#65676b"/><path d="M7.500 9.300h2M1.500 9h2.800M12.700 9h2.800"/></svg>
<svg class="abs" style="left:1024px;top:607.500px" width="17" height="17" viewBox="0 0 17 17" fill="none" stroke="#65676b" stroke-width="1.200" stroke-linecap="round"><circle cx="8.500" cy="8.500" r="7.400"/><path d="M5 10.300q3.500 3.200 7 0"/><circle cx="5.900" cy="6.500" r=".9" fill="#65676b" stroke="none"/><circle cx="11.100" cy="6.500" r=".9" fill="#65676b" stroke="none"/></svg>
<svg class="abs" style="left:1050px;top:607.500px" width="17" height="17" viewBox="0 0 17 17" fill="none" stroke="#65676b" stroke-width="1.200" stroke-linejoin="round"><path d="M1 5.300q0-1.400 1.400-1.400h2L5.600 2h5.800l1.200 1.900h2q1.400 0 1.400 1.400v8.300q0 1.400-1.400 1.400H2.400Q1 15 1 13.600z"/><circle cx="8.500" cy="9.200" r="3.300"/></svg>
<svg class="abs" style="left:1076.500px;top:607.500px" width="17" height="17" viewBox="0 0 17 17" fill="none" stroke="#65676b" stroke-width="1.200"><rect x="1" y="2" width="15" height="13" rx="3.500"/><text x="8.500" y="11.200" font-family="Liberation Sans, sans-serif" font-size="6.500" font-weight="bold" text-anchor="middle" fill="#65676b" stroke="none">GIF</text></svg>
<svg class="abs" style="left:1103.500px;top:607.500px" width="17" height="17" viewBox="0 0 17 17" fill="none" stroke="#65676b" stroke-width="1.200" stroke-linejoin="round" stroke-linecap="round"><path d="M2.600 4.200L12 1.600q1.300-.3 1.700 1l1.700 6.200-5.800 6.600-3.700 1q-1.300.3-1.700-1L1.600 5.900q-.3-1.300 1-1.700z"/><path d="M15.400 8.800q-3.500-.3-4.500 2.600-.6 2 -1.300 4"/><path d="M5.500 9.500q1.500 1.800 3.600 1"/><circle cx="5.700" cy="6.300" r=".8" fill="#65676b" stroke="none"/><circle cx="9.300" cy="5.300" r=".8" fill="#65676b" stroke="none"/></svg>
<svg class="abs" style="left:1228px;top:609px" width="15" height="14" viewBox="0 0 15 14" fill="#bec3c9"><path d="M.6 1.200Q.4.200 1.400.6l12.800 5.800q.8.600 0 1.200L1.400 13.400q-1 .4-.8-.6l1-4.500L8 7 1.600 5.700z"/></svg>
<!-- scrollbar arrows -->
<svg class="abs" style="left:1266px;top:82.500px" width="12" height="9" viewBox="0 0 12 9" fill="none" stroke="#4a4a4a" stroke-width="2"><path d="M2 7L6 3l4 4"/></svg>
<svg class="abs" style="left:1266px;top:669px" width="12" height="9" viewBox="0 0 12 9" fill="none" stroke="#4a4a4a" stroke-width="2"><path d="M2 2.500l4 4 4-4"/></svg>
<!--/RIGHT-ITEMS-->
<!--TASKBAR-->
<div id="taskbar" class="abs"></div>
<!--TASK-ITEMS-->
<!-- windows logo -->
<svg class="abs" style="left:14.500px;top:692.500px" width="16" height="15" viewBox="0 0 16 15" fill="#fff"><path d="M0 2.100l6.500-.9v5.900H0zM7.300 1.100L16 0v7.100H7.300zM0 7.900h6.500v5.900L0 12.900zM7.300 7.900H16V15l-8.700-1.100z"/></svg>
<!-- search box -->
<div class="abs" style="left:45px;top:682px;width:270px;height:36px;background:#f3f3f3;border:1px solid #dcdcdc"></div>
<svg class="abs" style="left:55px;top:692px" width="17" height="17" viewBox="0 0 17 17" fill="none" stroke="#1a1a1a" stroke-width="1.300" stroke-linecap="round"><circle cx="10.500" cy="6.500" r="4.900"/><path d="M7 10L1.300 15.700"/></svg>
<span id="tk1" class="t" style="left:83px;top:693px;font-size:14px;color:#333">Buscar</span>
<svg class="abs" style="left:246px;top:686px" width="60" height="28" viewBox="0 0 60 28"><path d="M24.500 2.500q1.800 8.800 10.500 10.500-8.700 1.700-10.500 10.500Q22.700 14.700 14 13q8.700-1.700 10.500-10.500z" fill="#f9b917"/><path d="M45 12q.9 4.300 5.200 5.200-4.300.9-5.200 5.200-.9-4.300-5.200-5.200 4.300-.9 5.200-5.200z" fill="#f9b917"/><path d="M6 18q.7 3 3.700 3.700Q6.700 22.400 6 25.400q-.7-3-3.700-3.700Q5.300 21 6 18z" fill="#2f9bea"/><circle cx="39.500" cy="4.800" r="1.500" fill="#e8622a"/><circle cx="56.500" cy="22.800" r="1.500" fill="#6cbf4b"/></svg>
<!-- task view -->
<svg class="abs" style="left:329px;top:691.500px" width="17" height="16" viewBox="0 0 17 16" fill="none" stroke="#fff" stroke-width="1.300"><path d="M1.500 1h8.500M1.500 15h8.500"/><rect x="2.200" y="4" width="7.300" height="8" /><path d="M13.500 1v14"/><rect x="12.300" y="5.500" width="2.400" height="3" fill="#fff" stroke="none"/></svg>
<!-- copilot -->
<svg class="abs" style="left:374.500px;top:690px" width="22" height="21" viewBox="0 0 22 21"><defs><linearGradient id="cp1" x1="0" y1="0" x2="0" y2="1"><stop offset="0" stop-color="#2a86f2"/><stop offset=".45" stop-color="#37c4a8"/><stop offset=".8" stop-color="#e8dc3a"/><stop offset="1" stop-color="#f5b83a"/></linearGradient><linearGradient id="cp2" x1="0" y1="0" x2="0" y2="1"><stop offset="0" stop-color="#a765f5"/><stop offset=".45" stop-color="#ee5fa8"/><stop offset="1" stop-color="#ff6f35"/></linearGradient></defs><path d="M13.200 5.400h5.400q2.300 0 1.700 2.300l-2.500 9.200q-.7 2.400-3.100 2.400H8.500q-2 0-1.500-2.100l2.600-9.300q.7-2.500 3.600-2.500z" fill="url(#cp2)"/><path d="M5.400 .8h6.200q2 0 1.500 2.100l-2.600 9.300q-.7 2.500-3.300 2.500H2q-2.300 0-1.700-2.300L2.800 3.200Q3.500.8 5.400.8z" fill="url(#cp1)"/><path d="M11 1q2.400 0 1.900 2.300l-2.300 8.200-1.700-.3 2.300-8.400q.3-1.200-.2-1.800z" fill="#1b3fb0" opacity=".85"/></svg>
<!-- edge -->
<svg class="abs" style="left:419.500px;top:688.500px" width="23.500" height="23.500" viewBox="0 0 24 24"><defs><linearGradient id="ed1" x1="0" y1="0" x2="0" y2="1"><stop offset="0" stop-color="#2a9be8"/><stop offset="1" stop-color="#1560c4"/></linearGradient><linearGradient id="ed2" x1="0" y1=".7" x2="1" y2=".1"><stop offset="0" stop-color="#28b6e6"/><stop offset=".6" stop-color="#3fce9a"/><stop offset="1" stop-color="#6ddb55"/></linearGradient></defs><circle cx="12" cy="12" r="11.500" fill="url(#ed1)"/><path d="M.6 10.500Q2 1.200 12 .5q9.500.3 11.400 8.800.5 5-4 6h-5.800q2-1.300 1.400-3.800-1.200-3-4.800-2.900-5.400.3-9.600 1.900z" fill="url(#ed2)"/><path d="M8.700 9.200q-2.800 2.400-2 6.200 1 4.800 6.300 6.400 5 .7 8.400-2.800-4.300 1.600-7.600-.5-3.400-2.800-1.800-6.700.2-1.800-1.200-2.600-1-.5-2.100 0z" fill="#0e4a9e"/><path d="M13.300 10.300q3.200-1.600 5.600.6.900 2.700-1.600 4.400h-4.100q1.800-2.300.1-5z" fill="#1c1e23"/></svg>
<!-- explorer -->
<svg class="abs" style="left:466px;top:691px" width="22" height="18" viewBox="0 0 22 18"><path d="M0 1.500Q0 .5 1 .5h6.500l2 2H21q1 0 1 1V16q0 1-1 1H1q-1 0-1-1z" fill="#f2b731"/><path d="M0 5h22v11q0 1-1 1H1q-1 0-1-1z" fill="#fcd667"/><path d="M5 10h12v7H5z" fill="#3d8fd6"/><path d="M7.500 13h7v4h-7z" fill="#fcd667"/></svg>
<div class="abs" style="left:458px;top:717px;width:37.500px;height:2px;background:#8cb9e8"></div>
<!-- store -->
<svg class="abs" style="left:512px;top:689.500px" width="22" height="22" viewBox="0 0 22 22"><path d="M6.500 6V4.500Q6.500 1 11 1t4.500 3.500V6" fill="none" stroke="#3aa0e8" stroke-width="1.600"/><path d="M1 5.500h20v13q0 2.500-2.500 2.500h-15Q1 21 1 18.500z" fill="#f4f4f4"/><rect x="6.300" y="8.500" width="4.200" height="4.200" fill="#f25022"/><rect x="11.500" y="8.500" width="4.200" height="4.200" fill="#7fba00"/><rect x="6.300" y="13.700" width="4.200" height="4.200" fill="#00a4ef"/><rect x="11.500" y="13.700" width="4.200" height="4.200" fill="#ffb900"/></svg>
<!-- outlook -->
<svg class="abs" style="left:557px;top:689.500px" width="24" height="21" viewBox="0 0 24 21"><path d="M8 4l8-4 8 5v12q0 2-2 2H10q-2 0-2-2z" fill="#1a8ae0"/><path d="M8 9l16-4v12q0 2-2 2H10q-2 0-2-2z" fill="#41b5f5"/><path d="M8 19L24 8v9q0 2-2 2z" fill="#0f64b8"/><rect x="0" y="5" width="13" height="13" rx="1.800" fill="#0f6cbd"/><circle cx="6.500" cy="11.500" r="3.300" fill="none" stroke="#fff" stroke-width="1.700"/></svg>
<!-- Ps -->
<div class="abs" style="left:605px;top:691px;width:19px;height:18.500px;border-radius:3px;background:#001e36"></div>
<span class="t" style="left:608px;top:694px;font-size:12px;font-weight:bold;color:#31a8ff;letter-spacing:-.3px">Ps</span>
<div class="abs" style="left:595.500px;top:717px;width:37.500px;height:2px;background:#8cb9e8"></div>
<!-- firefox -->
<div class="abs" style="left:638px;top:681px;width:45px;height:38px;background:#3f4248"></div>
<div class="abs" style="left:638px;top:717px;width:45px;height:2px;background:#8cb9e8"></div>
<svg class="abs" style="left:649px;top:688.500px" width="23" height="23" viewBox="0 0 23 23"><defs><radialGradient id="ff1" cx=".7" cy=".2" r=".9"><stop offset="0" stop-color="#ffe847"/><stop offset=".4" stop-color="#ff9a2a"/><stop offset=".8" stop-color="#ff4a3d"/><stop offset="1" stop-color="#e0256a"/></radialGradient></defs><path d="M11.500 3.500Q14 1 13.500 0q4 2.500 4.500 5.500 1-.5 1-2 3.500 4 3.500 8.500Q22.500 22 11.500 22.800.5 22 .5 12q0-3.500 2.500-6 0 1.500.8 2.300Q5 5 8.500 3.800q1.500-.5 3-.3z" fill="url(#ff1)"/><circle cx="11.500" cy="12.500" r="5" fill="#6a3cc8"/><path d="M5.500 10q3-3 7-1.500-3 .5-3 3 1.500 3 5 2-2 3.500-6 2.500-4-2-3-6z" fill="#ff8a2a"/></svg>
<!-- Pr -->
<div class="abs" style="left:696px;top:690.500px;width:20px;height:19px;border-radius:3px;background:#00005b"></div>
<span class="t" style="left:699.500px;top:694px;font-size:12px;font-weight:bold;color:#9999ff;letter-spacing:-.3px">Pr</span>
<div class="abs" style="left:687.500px;top:717px;width:37.500px;height:2px;background:#8cb9e8"></div>
<!-- vlc -->
<svg class="abs" style="left:742.500px;top:689px" width="21" height="22" viewBox="0 0 21 22"><path d="M8.800 1.500q1.700-1.200 3.400 0L17 16H4z" fill="#ff8a00"/><path d="M7.300 6.200h6.400l1.200 3.600H6.100zM5 13h11l.8 2.500H4.200z" fill="#f4f4f4"/><path d="M2.500 15.500h16l2 4.500q.3 1.500-1.200 1.500H1.700Q.2 21.500.5 20z" fill="#ff8a00"/></svg>
<!-- Ai -->
<div class="abs" style="left:789px;top:690.500px;width:19px;height:19px;border-radius:3px;background:#330000"></div>
<span class="t" style="left:792.500px;top:694px;font-size:12px;font-weight:bold;color:#ff9a00;letter-spacing:-.2px">Ai</span>
<div class="abs" style="left:780px;top:717px;width:36.500px;height:2px;background:#8cb9e8"></div>
<!-- whatsapp -->
<svg class="abs" style="left:832px;top:689px" width="23" height="23" viewBox="0 0 23 23"><path d="M11.700 1.200A10 10 0 0 0 3 16.300L1.300 21.800l5.700-1.600A10 10 0 1 0 11.700 1.200z" fill="none" stroke="#25d366" stroke-width="2"/><path d="M7.600 6.300q.7-.5 1.200.2l1 2q.2.600-.3 1.100l-.6.700q1.300 2.400 3.800 3.500l.8-.9q.4-.4 1-.2l2 1q.6.400.3 1.100-.8 2-2.800 1.800-5.600-1-7.400-7.200-.4-1.900 1-3.100z" fill="#25d366"/></svg>
<div class="abs" style="left:848px;top:699px;width:16px;height:16px;border-radius:50%;background:#2b2b2b;border:1.300px solid #e8e8e8"></div>
<span class="t" style="left:850.500px;top:702px;font-size:10px;font-weight:bold;color:#fff;letter-spacing:-.4px">11</span>
<div class="abs" style="left:826px;top:717px;width:38px;height:2px;background:#8cb9e8"></div>
<!-- weather -->
<svg class="abs" style="left:947px;top:690px" width="26" height="21" viewBox="0 0 26 21"><defs><linearGradient id="cl" x1="0" y1="0" x2="0" y2="1"><stop offset="0" stop-color="#d6e6fb"/><stop offset="1" stop-color="#9fc3f0"/></linearGradient></defs><path d="M6.500 20.500Q1 20.500 1 15.500q0-4 4.200-4.800Q6.500 5 12.500 5q5.500 0 7 5.200 5 .3 5 5 0 5.300-5.500 5.300z" fill="url(#cl)"/><circle cx="18" cy="5.500" r="5.500" fill="#d13438"/></svg>
<span class="t" style="left:962.500px;top:691.500px;font-size:8.500px;font-weight:bold;color:#fff">3</span>
<span id="tk2" class="t" style="left:979px;top:694px;font-size:13px;color:#fff">15°C</span>
<svg class="abs" style="left:1029px;top:696.500px" width="14" height="9" viewBox="0 0 14 9" fill="none" stroke="#fff" stroke-width="1.300"><path d="M1 7.500l6-6 6 6"/></svg>
<svg class="abs" style="left:1051px;top:692px" width="15" height="17" viewBox="0 0 15 17" fill="none" stroke="#fff" stroke-width="1.200" stroke-linecap="round"><path d="M3 3.200q3.500-2 7 0M3 13.800q3.500 2 7 0"/><rect x="1.500" y="5.200" width="8" height="6.600" rx="1.600"/><path d="M9.500 7.500l3.500-1.800v5.600L9.500 9.500"/></svg>
<svg class="abs" style="left:1072px;top:693.500px" width="17" height="14" viewBox="0 0 17 14" fill="none" stroke="#fff" stroke-width="1.200" stroke-linecap="round" stroke-linejoin="round"><path d="M1 4.800h2.500L7 1.500v11L3.500 9.200H1z"/><path d="M9.500 4.500q1.500 2.500 0 5M11.800 3q2.600 4 0 8M14 1.500q3.600 5.500 0 11"/></svg>
<svg class="abs" style="left:1094px;top:692px" width="18" height="17" viewBox="0 0 18 17" fill="none" stroke="#fff" stroke-width="1.200"><path d="M1.500 2.800L15.500 1v11l-14 1.500z"/><path d="M5 5.500h4.500v4H6.500z" stroke-width="1"/><path d="M3 15.500h7" /><circle cx="13.200" cy="12.600" r="3.600" fill="#f7941d" stroke="none"/></svg>
<svg class="abs" style="left:1117px;top:693px" width="17" height="15" viewBox="0 0 17 15" fill="none" stroke="#fff" stroke-width="1.200"><rect x="4.500" y="1.500" width="11.500" height="8" /><path d="M10.200 9.500v3.200M7 12.800h6.500M1 1.500h2.500v4H1zM2.200 5.500v6"/></svg>
<span id="tk3" class="t" style="left:1144.500px;top:694.500px;font-size:10.500px;color:#fff">ESP</span>
<span id="tk4" class="t" style="left:1188.500px;top:686.500px;font-size:10.500px;color:#fff">15:01</span>
<span id="tk5" class="t" style="left:1173.500px;top:703px;font-size:10.500px;color:#fff">20/10/2025</span>
<svg class="abs" style="left:1241px;top:692px" width="17" height="14" viewBox="0 0 17 14"><path d="M1 .5h15v9.500H5.500L2.500 13V10H1z" fill="#fff"/><path d="M3.500 3.200h10M3.500 5.500h10M3.500 7.800h7" stroke="#1d2026" stroke-width="1"/></svg>
<div class="abs" style="left:1247px;top:698px;width:18px;height:18px;border-radius:50%;background:#2b2b2b;border:1.300px solid #b8b8b8"></div>
<span class="t" style="left:1250.500px;top:702px;font-size:10px;font-weight:bold;color:#fff;letter-spacing:-.3px">20</span>
<div class="abs" style="left:1276px;top:686px;width:1px;height:30px;background:#3a3d42"></div>
<!--/TASK-ITEMS-->
</div>
</body>
</html>
